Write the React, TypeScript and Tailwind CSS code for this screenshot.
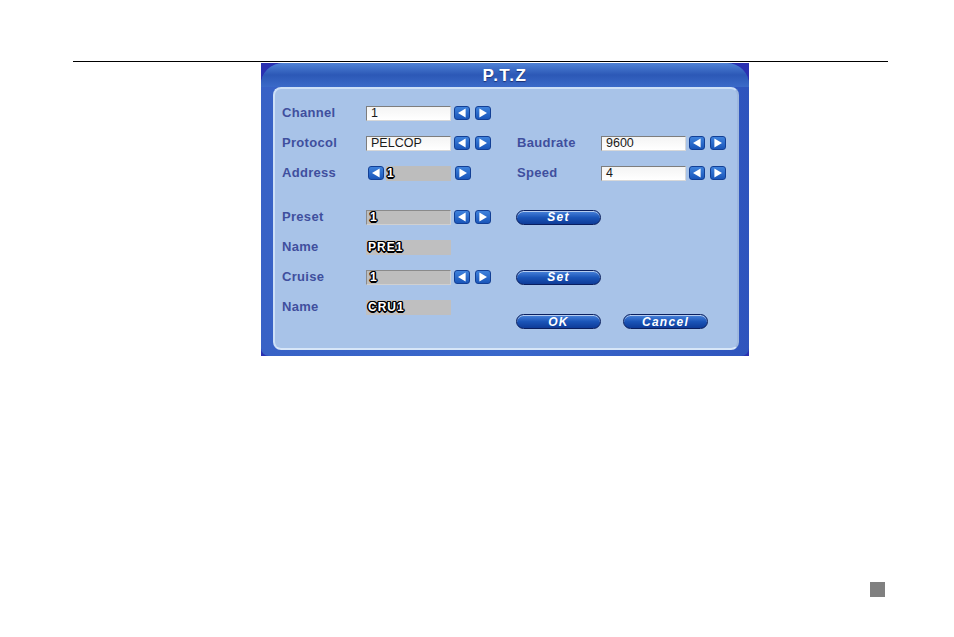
import React from "react";

const OUTLINE =
  "[text-shadow:1.5px_0_0_#000,-1.5px_0_0_#000,0_1.5px_0_#000,0_-1.5px_0_#000,1px_1px_0_#000,-1px_-1px_0_#000,1px_-1px_0_#000,-1px_1px_0_#000]";

function Arrow({ dir }: { dir: "left" | "right" }) {
  return (
    <span className="flex h-[14px] w-[16px] shrink-0 items-center justify-center rounded-[3px] border border-[#123f95] bg-linear-to-b from-[#3f82dc] to-[#1a56ba]">
      <svg width="10" height="10" viewBox="0 0 10 10">
        <path
          d={dir === "left" ? "M8.6 0.6 L1 5 L8.6 9.4 Z" : "M1.4 0.6 L9 5 L1.4 9.4 Z"}
          fill="white"
        />
      </svg>
    </span>
  );
}

function Arrows() {
  return (
    <div className="ml-[3px] flex gap-[5px]">
      <Arrow dir="left" />
      <Arrow dir="right" />
    </div>
  );
}

function TextBox({ value }: { value: string }) {
  return (
    <div className="flex h-[15px] w-[85px] items-center border border-t-[#7d7d7d] border-l-[#7d7d7d] border-b-[#d8d8d8] border-r-[#d8d8d8] bg-linear-to-b from-[#f4f4f4] to-white pl-[4px] text-[12.5px] leading-none text-[#1a1a1a]">
      {value}
    </div>
  );
}

function Outlined({ value }: { value: string }) {
  return (
    <span className={`pl-[1px] text-[12px] font-bold leading-none tracking-[1px] text-white ${OUTLINE}`}>
      {value}
    </span>
  );
}

function GrayBox({ value, framed }: { value: string; framed?: boolean }) {
  return (
    <div
      className={
        framed
          ? "flex h-[15px] w-[85px] items-center border border-t-[#8a8a8a] border-l-[#8a8a8a] border-b-[#d0d0d0] border-r-[#d0d0d0] bg-[#bdbdbd] pl-[2px]"
          : "flex h-[15px] w-[85px] items-center bg-[#bfbfc0] pl-[1px]"
      }
    >
      <Outlined value={value} />
    </div>
  );
}

function Label({ children }: { children: React.ReactNode }) {
  return (
    <span className="w-[84px] shrink-0 text-[13px] font-bold tracking-[0.3px] text-[#3f4f9e]">
      {children}
    </span>
  );
}

function PillButton({ children }: { children: React.ReactNode }) {
  return (
    <span className="flex h-[15px] w-[85px] items-center justify-center rounded-full border border-[#0a1f5e] bg-linear-to-b from-[#4a84dc] via-[#1b55b8] to-[#0e3b98] text-[12px] font-bold italic leading-none tracking-[1.3px] text-white shadow-[inset_0_1px_0_rgba(255,255,255,0.6)]">
      {children}
    </span>
  );
}

function Row({
  left,
  right,
  rightClass,
}: {
  left: React.ReactNode;
  right?: React.ReactNode;
  rightClass?: string;
}) {
  return (
    <div className="flex h-[30px] items-center">
      <div className="flex w-[235px] shrink-0 items-center">{left}</div>
      <div className={rightClass ?? "flex items-center"}>{right}</div>
    </div>
  );
}

export default function App() {
  return (
    <div className="h-[637px] w-[954px] overflow-hidden bg-white pt-[61px] font-['Liberation_Sans',Arial,sans-serif]">
      <div className="ml-[73px] h-px w-[815px] bg-black" />

      <div className="ml-[261px] mt-[1px] h-[293px] w-[488px] bg-[#2a31b2]">
        <div className="flex h-full flex-col rounded-t-[22px] rounded-b-[8px] bg-linear-to-r from-[#3862c6] via-[#3a68cb] to-[#2f55bd]">
          <div className="flex h-[24px] shrink-0 items-center justify-center rounded-t-[22px] bg-linear-to-b from-[#4f82d6] via-[#2c58b6] to-[#3b6ac8]">
            <span className="text-[17px] font-bold leading-none tracking-[1.5px] text-white [text-shadow:0_1px_1px_#1b2f70]">
              P.T.Z
            </span>
          </div>

          <div className="mb-[6px] ml-[12px] mr-[10px] flex-1 rounded-[8px] border-2 border-t-[#cde0f7] border-l-[#cde0f7] border-b-[#d7e6f8] border-r-[#9fb8de] bg-[#a8c3e8] pl-[7px] pt-[9px]">
            <Row
              left={
                <>
                  <Label>Channel</Label>
                  <TextBox value="1" />
                  <Arrows />
                </>
              }
            />
            <Row
              left={
                <>
                  <Label>Protocol</Label>
                  <TextBox value="PELCOP" />
                  <Arrows />
                </>
              }
              right={
                <>
                  <Label>Baudrate</Label>
                  <TextBox value="9600" />
                  <Arrows />
                </>
              }
            />
            <Row
              left={
                <>
                  <Label>Address</Label>
                  <div className="ml-[2px] flex items-center">
                    <Arrow dir="left" />
                    <div className="ml-[2px] flex h-[15px] w-[65px] items-center bg-[#bdbdbd]">
                      <Outlined value="1" />
                    </div>
                    <div className="ml-[4px]">
                      <Arrow dir="right" />
                    </div>
                  </div>
                </>
              }
              right={
                <>
                  <Label>Speed</Label>
                  <TextBox value="4" />
                  <Arrows />
                </>
              }
            />

            <div className="h-[14px]" />

            <Row
              left={
                <>
                  <Label>Preset</Label>
                  <GrayBox value="1" framed />
                  <Arrows />
                </>
              }
              right={<PillButton>Set</PillButton>}
              rightClass="-ml-[1px] flex items-center"
            />
            <Row
              left={
                <>
                  <Label>Name</Label>
                  <GrayBox value="PRE1" />
                </>
              }
            />
            <Row
              left={
                <>
                  <Label>Cruise</Label>
                  <GrayBox value="1" framed />
                  <Arrows />
                </>
              }
              right={<PillButton>Set</PillButton>}
              rightClass="-ml-[1px] flex items-center"
            />
            <Row
              left={
                <>
                  <Label>Name</Label>
                  <GrayBox value="CRU1" />
                </>
              }
              right={
                <>
                  <PillButton>OK</PillButton>
                  <PillButton>Cancel</PillButton>
                </>
              }
              rightClass="-ml-[1px] mt-[22px] flex gap-[22px] self-start"
            />
          </div>
        </div>
      </div>

      <div className="ml-[870px] mt-[226px] h-[15px] w-[15px] bg-[#808080]" />
    </div>
  );
}
